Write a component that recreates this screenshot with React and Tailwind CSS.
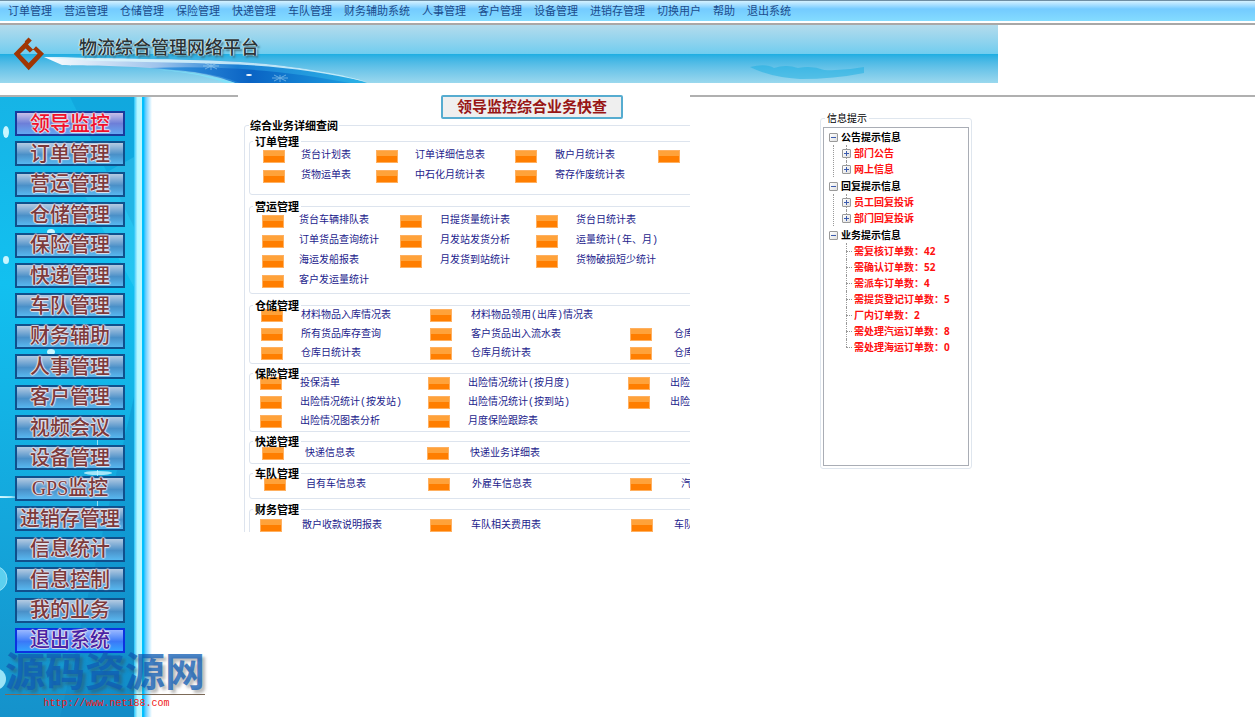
import React, { useState } from 'react';
import clsx from 'clsx';

const topMenu = [
  '订单管理', '营运管理', '仓储管理', '保险管理', '快递管理', '车队管理', '财务辅助系统',
  '人事管理', '客户管理', '设备管理', '进销存管理', '切换用户', '帮助', '退出系统',
];

const sideMenu = [
  '领导监控', '订单管理', '营运管理', '仓储管理', '保险管理', '快递管理', '车队管理', '财务辅助', '人事管理',
  '客户管理', '视频会议', '设备管理', 'GPS监控', '进销存管理', '信息统计', '信息控制', '我的业务', '退出系统',
];

// null keeps a cell of the grid empty, '' is a button without a caption
const sections = [
  {
    title: '订单管理',
    box: 'mt-[15px]',
    grid: 'grid-cols-[38px_75px_39px_100px_40px_103px_40px_60px] auto-rows-[20px] pt-1 pb-2 pl-[13px]',
    rows: [
      ['货台计划表', '订单详细信息表', '散户月统计表', ''],
      ['货物运单表', '中石化月统计表', '寄存作废统计表', null],
    ],
  },
  {
    title: '营运管理',
    box: 'mt-[11px]',
    grid: 'grid-cols-[37px_101px_40px_96px_40px_120px] auto-rows-[20px] pt-1 pb-[2px] pl-3',
    rows: [
      ['货台车辆排队表', '日提货量统计表', '货台日统计表'],
      ['订单货品查询统计', '月发站发货分析', '运量统计(年、月)'],
      ['海运发船报表', '月发货到站统计', '货物破损短少统计'],
      ['客户发运量统计', null, null],
    ],
  },
  {
    title: '仓储管理',
    box: 'mt-[11px]',
    grid: 'grid-cols-[40px_129px_41px_159px_44px_60px] auto-rows-[19px] pl-[11px]',
    rows: [
      ['材料物品入库情况表', '材料物品领用(出库)情况表', null],
      ['所有货品库存查询', '客户货品出入流水表', '仓库'],
      ['仓库日统计表', '仓库月统计表', '仓库'],
    ],
  },
  {
    title: '保险管理',
    box: 'mt-[9px]',
    grid: 'grid-cols-[40px_128px_40px_160px_42px_60px] auto-rows-[19px] pl-[10px]',
    rows: [
      ['投保清单', '出险情况统计(按月度)', '出险'],
      ['出险情况统计(按发站)', '出险情况统计(按到站)', '出险'],
      ['出险情况图表分析', '月度保险跟踪表', null],
    ],
  },
  {
    title: '快递管理',
    box: 'mt-[9px]',
    grid: 'grid-cols-[43px_122px_43px_120px] auto-rows-[19px] pt-[2px] pl-3',
    rows: [['快递信息表', '快递业务详细表']],
  },
  {
    title: '车队管理',
    box: 'mt-[9px]',
    grid: 'grid-cols-[42px_122px_44px_158px_51px_60px] auto-rows-[19px] pt-px pb-1 pl-[14px]',
    rows: [['自有车信息表', '外雇车信息表', '汽']],
  },
  {
    title: '财务管理',
    box: 'mt-[10px]',
    grid: 'grid-cols-[42px_128px_41px_160px_43px_60px] auto-rows-[19px] pt-[6px] pb-2 pl-[10px]',
    rows: [['散户收款说明报表', '车队相关费用表', '车队']],
  },
];

const tree = [
  { title: '公告提示信息', items: [{ text: '部门公告', node: true }, { text: '网上信息', node: true }] },
  { title: '回复提示信息', items: [{ text: '员工回复投诉', node: true }, { text: '部门回复投诉', node: true }] },
  {
    title: '业务提示信息',
    items: [
      { text: '需复核订单数：42' },
      { text: '需确认订单数：52' },
      { text: '需派车订单数：4' },
      { text: '需提货登记订单数：5' },
      { text: '厂内订单数：2' },
      { text: '需处理汽运订单数：8' },
      { text: '需处理海运订单数：0' },
    ],
  },
];

function TopMenu() {
  return (
    <nav className="border-b-2 border-[#a8a8a8] bg-white pb-[2px]">
      <ul className="flex h-[21px] items-center gap-3 overflow-hidden border-t border-[#6f8ea3] bg-linear-to-b from-[#d3f1ff] from-0% via-[#74cbff] via-40% to-[#84dcff] pl-2 text-[11px] whitespace-nowrap text-[#1c4c8c]">
        {topMenu.map((name) => (
          <li key={name}>
            <a href="#" className="block">{name}</a>
          </li>
        ))}
      </ul>
    </nav>
  );
}

function Logo() {
  return (
    <svg className="h-[34px] w-8 shrink-0" viewBox="0 0 32 34" aria-hidden="true">
      <path
        fillRule="evenodd"
        d="M15.500 0.500 L18.800 3.600 L15 7.600 L20 12.600 L23 9.200 L31 16.800 L15.700 33.200 L0.700 16.800 L12 5.200 L11.800 4.200 Z M7 17 L12.600 11.400 L16.800 15.600 L19.800 13 L21 13 L24.600 16.800 L15.700 26 Z"
        fill="#a03604"
      />
    </svg>
  );
}

function Banner() {
  return (
    <header className="relative flex h-[58px] w-[998px] max-w-full items-center overflow-hidden bg-linear-to-b from-[#b3dbec] from-0% via-[#6fcdef] via-50% to-[#9ad8ee] pl-[13px]">
      <div className="absolute inset-x-0 top-[29px] bottom-0 bg-linear-to-b from-[#1aaee2] to-[#9ad8ee]" />
      <svg className="absolute top-0 left-0 h-[58px] w-[998px]" viewBox="0 0 998 58" aria-hidden="true">
        <defs>
          <linearGradient id="wave" x1="0" x2="1">
            <stop offset="0" stopColor="#ffffff" />
            <stop offset="0.35" stopColor="#9fc4ec" />
            <stop offset="0.6" stopColor="#1a7fd4" />
            <stop offset="1" stopColor="#2bb2e6" />
          </linearGradient>
          <linearGradient id="deep" x1="0" x2="1">
            <stop offset="0" stopColor="#3f9fe4" />
            <stop offset="0.5" stopColor="#0a63c4" />
            <stop offset="1" stopColor="#1c9ade" />
          </linearGradient>
        </defs>
        <path d="M44 32 C130 34 190 34 240 37 C300 41 345 50 367 58 L235 58 C215 50 190 45 150 43 C110 40 80 41 62 40 Z" fill="url(#wave)" />
        <path d="M150 43 C220 40 290 46 350 58 L240 58 C215 48 190 46 150 43 Z" fill="url(#deep)" />
        <path d="M44 32 C130 34 190 34 240 37 C300 41 345 50 367 57 C320 46 270 40 220 39 C150 36 90 38 44 32 Z" fill="#d9f4fb" opacity="0.85" />
        <path d="M150 44 C190 46 215 52 235 58 L226 58 C205 51 190 47 150 44 Z" fill="#7fe0f8" />
        <g stroke="#bfe6f8" strokeWidth="1" opacity="0.5">
          <path d="M203 41 h16 M205 38 l12 6 M205 44 l12 -6 M211 38 v7" />
          <path d="M272 53 h16 M274 50 l12 6 M274 56 l12 -6 M280 50 v7" />
        </g>
        <ellipse cx="249" cy="50" rx="3" ry="1" fill="#fff" />
        <path d="M750 42 q16 -4 24 1 q12 -4 24 0 q14 -3 26 2 q20 1 40 -3 v6 q-30 6 -64 6 q-30 -2 -50 -12z" fill="#1aaee2" opacity="0.5" />
      </svg>
      <div className="relative flex items-center gap-[34px]">
        <Logo />
        <h1 className="pb-3 text-[18px] leading-6 font-medium text-[#2c3436] [text-shadow:1px_0_1px_#d4eef6,-1px_0_1px_#d4eef6,2px_2px_2px_#3f7488]">
          物流综合管理网络平台
        </h1>
      </div>
    </header>
  );
}

function SideMenu() {
  const last = sideMenu.length - 1;

  return (
    <aside className="relative flex w-[152px] flex-1">
      <div className="relative w-[134px] overflow-hidden bg-linear-to-b from-[#16b4e6] from-0% via-[#12c0f0] via-30% to-[#1592cb]">
        <svg className="absolute inset-0 h-full w-full" viewBox="0 0 134 620" preserveAspectRatio="none" aria-hidden="true">
          <path d="M70 0 H134 V130 Z" fill="#0c9ad4" opacity="0.45" />
          <path d="M134 60 V190 L80 90 Z" fill="#5ad8f8" opacity="0.25" />
          <path d="M134 300 V620 H60 Z" fill="#0c7fc0" opacity="0.3" />
          <g fill="#c9f6ff">
            <ellipse cx="6" cy="35" rx="3" ry="6" />
            <ellipse cx="6" cy="163" rx="3" ry="4" />
            <ellipse cx="51" cy="135" rx="4" ry="3" />
            <ellipse cx="51" cy="255" rx="4" ry="3" />
            <ellipse cx="98" cy="376" rx="14" ry="2" opacity="0.8" />
            <ellipse cx="0" cy="400" rx="16" ry="1" />
            <rect x="97" y="340" width="1" height="70" opacity="0.7" />
          </g>
          <circle cx="-6" cy="482" r="13" fill="#6fdcf6" stroke="#b8f2ff" opacity="0.8" />
          <circle cx="-5" cy="582" r="11" fill="#a8ecfb" opacity="0.9" />
        </svg>
        <ul className="relative ml-[15px] flex h-[556px] w-[110px] flex-col justify-between pt-[14px]">
          {sideMenu.map((name, i) => (
            <li key={name + i}>
              <button
                type="button"
                className={clsx(
                  'flex h-[25px] w-full items-center justify-center border-2 text-[20px] leading-none font-medium whitespace-nowrap',
                  i === 0 && 'border-[#1a3a9c] bg-linear-to-b from-[#c9bfe6] via-[#6d7fd8] to-[#62a8f2] text-[#f0102c]',
                  i > 0 && i < last && 'border-[#10508c] bg-linear-to-b from-[#b4cbe2] from-0% via-[#4a90c8] via-55% to-[#58b8f0] text-[#7c3a3c]',
                  i === last && 'border-[#0c32e0] bg-linear-to-b from-[#9ab8ff] from-0% via-[#3a78f8] via-55% to-[#34a4ff] text-[#4a22a4]',
                  '[text-shadow:1px_0_1px_#e8e4ec,-1px_0_1px_#e8e4ec,0_1px_1px_#e8e4ec,0_-1px_1px_#e8e4ec]'
                )}
              >
                {name === 'GPS监控' ? (
                  <>
                    <span className="font-['Liberation_Serif',serif] font-normal">GPS</span>监控
                  </>
                ) : (
                  name
                )}
              </button>
            </li>
          ))}
        </ul>
      </div>
      <div className="flex-1 bg-linear-to-r from-[#00c4f8] from-0% via-[#b8f8ff] via-45% to-[#b8f8ff] to-50%" />
      <div className="w-[10px] bg-linear-to-r from-[#00c0ff] from-20% to-white" />

      {/* site stamp lies over the foot of the menu */}
      <div className="absolute bottom-1 left-[5px] w-[200px]">
        <p className="border-b border-[#7c6a58] text-center text-[40px] leading-[44px] font-bold whitespace-nowrap text-[#0f5cb4]/75 [text-shadow:3px_3px_3px_rgba(60,60,60,0.35)]">
          源码资源网
        </p>
        <a href="#" className="block pl-[3px] text-center font-['Liberation_Mono',monospace] text-[10px] leading-[18px] text-[#f01818]">
          http://www.net188.com
        </a>
      </div>
    </aside>
  );
}

function Section({ title, box, grid, rows }) {
  return (
    <fieldset className={clsx('rounded-[3px] border border-[#dde4ee]', box)}>
      <legend className="relative z-10 ml-[3px] px-[2px] text-[11px] leading-[0px] font-bold text-black">{title}</legend>
      <div
        className={clsx(
          "grid items-center font-['Liberation_Mono','Noto_Sans_CJK_SC',monospace] text-[10px] leading-4 whitespace-nowrap text-[#1c1c8c]",
          grid
        )}
      >
        {rows.flat().map((name, i) =>
          name === null ? (
            <React.Fragment key={i}>
              <span />
              <span />
            </React.Fragment>
          ) : (
            <React.Fragment key={i}>
              <button
                type="button"
                aria-label={name || title}
                className="h-[13px] w-[22px] border border-[#ffb060] bg-linear-to-b from-[#ffa23a] from-50% to-[#ff7e00] to-50%"
              />
              <a href="#">{name}</a>
            </React.Fragment>
          )
        )}
      </div>
    </fieldset>
  );
}

function BusinessPanel() {
  return (
    <main className="h-[437px] w-[452px] shrink-0 overflow-hidden bg-white">
      <button
        type="button"
        className="ml-[203px] block h-6 w-[182px] rounded-[2px] border-2 border-[#56acd0] bg-[#efefef] pb-[2px] text-[15px] leading-none font-bold text-[#981616]"
      >
        领导监控综合业务快查
      </button>
      <fieldset className="mt-[6px] ml-[6px] w-[700px] rounded-[3px] border border-[#dde4ee] px-1 pb-2">
        <legend className="px-px text-[11px] leading-[0px] font-bold text-black">综合业务详细查阅</legend>
        {sections.map((section) => (
          <Section key={section.title} {...section} />
        ))}
      </fieldset>
    </main>
  );
}

function Toggle({ open, label, onClick }) {
  return (
    <button
      type="button"
      aria-label={label}
      aria-expanded={open}
      onClick={onClick}
      className="relative h-[9px] w-[9px] shrink-0 rounded-[1px] border border-[#9a9a9a] bg-linear-to-br from-white to-[#e0e0e0]"
    >
      <svg className="h-[7px] w-[7px]" viewBox="0 0 7 7" aria-hidden="true">
        <path d={open ? 'M1 3.500 H6' : 'M1 3.500 H6 M3.500 1 V6'} stroke="#3c5cae" strokeWidth="1" />
      </svg>
    </button>
  );
}

function TreeGroup({ title, items, isLast }) {
  const [open, setOpen] = useState(true);

  return (
    <li className="mb-px">
      <div className="flex h-4 items-center gap-[3px] pl-[5px] text-black">
        <Toggle open={open} label={title} onClick={() => setOpen(!open)} />
        <span>{title}</span>
      </div>
      {open && (
        <ul className={clsx('ml-[9px] border-l border-dotted pl-3', isLast ? 'border-transparent' : 'border-[#999]')}>
          {items.map((item, i) => (
            <li key={item.text} className="relative flex h-4 items-center">
              <span
                className={clsx(
                  'absolute top-0 left-0 border-l border-dotted border-[#999]',
                  i === items.length - 1 ? 'h-1/2' : 'h-full'
                )}
              />
              {item.node ? (
                <span className="-ml-1 flex w-3">
                  <Toggle open={false} label={item.text} />
                </span>
              ) : (
                <span className="mr-[2px] w-[6px] border-t border-dotted border-[#999]" />
              )}
              <a href="#" className="text-[#ff1010]">{item.text}</a>
            </li>
          ))}
        </ul>
      )}
    </li>
  );
}

function InfoPanel() {
  return (
    <fieldset className="mt-[21px] ml-[130px] w-[152px] rounded-[3px] border border-[#dfe6ee] px-[2px] pb-[2px]">
      <legend className="ml-[2px] px-[2px] text-[10px] leading-[0px] text-black">信息提示</legend>
      <ul className="mt-2 h-[339px] border border-[#a9adb5] bg-white pt-px font-['Open_Sans','Noto_Sans_CJK_SC',sans-serif] text-[10px] leading-4 font-bold whitespace-nowrap">
        {tree.map((group, i) => (
          <TreeGroup key={group.title} {...group} isLast={i === tree.length - 1} />
        ))}
      </ul>
    </fieldset>
  );
}

export default function App() {
  return (
    <div className="flex min-h-screen flex-col overflow-x-hidden bg-white font-['Liberation_Sans','Noto_Sans_CJK_SC',sans-serif]">
      <TopMenu />
      <Banner />
      <div className="mt-3 flex flex-1">
        <div className="flex w-[238px] shrink-0 flex-col border-t-2 border-[#b0b0b0]">
          <SideMenu />
        </div>
        <BusinessPanel />
        <div className="flex-1 border-t-2 border-[#b0b0b0]">
          <InfoPanel />
        </div>
      </div>
    </div>
  );
}
